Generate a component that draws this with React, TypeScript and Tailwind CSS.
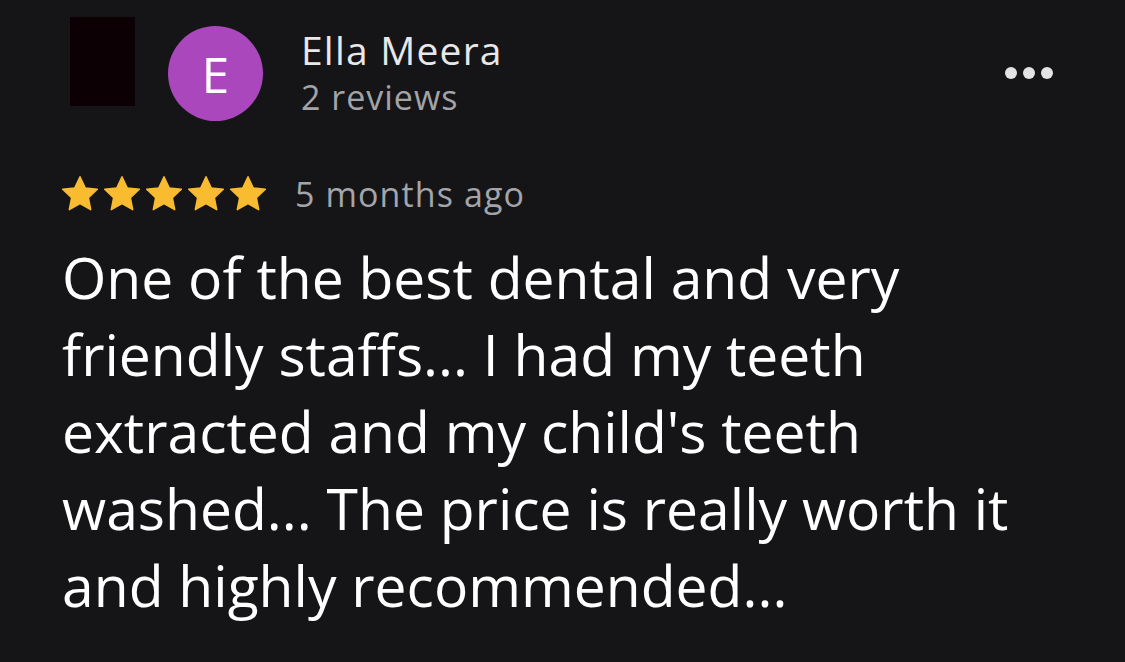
const Star = () => (
  <svg viewBox="0 0 24 24" className="w-[44px] h-[44px] -mx-[1px]">
    <path
      d="M12 2.6l2.83 6.05 6.62.8-4.88 4.55 1.27 6.55L12 17.3l-5.84 3.25 1.27-6.55L2.55 9.45l6.62-.8z"
      fill="#f9bb2f"
      stroke="#f9bb2f"
      strokeWidth="0.8"
      strokeLinejoin="round"
    />
  </svg>
)

export default function App() {
  return (
    <div
      className="w-[1125px] h-[662px] bg-[#151517] overflow-hidden relative"
      style={{ fontFamily: '"Open Sans", Roboto, sans-serif' }}
    >
      {/* header */}
      <div className="flex items-start pt-[17px]">
        <div className="ml-[70px] w-[65px] h-[89px] bg-[#0c0004]" />
        <div className="ml-[33px] mt-[9px] w-[95px] h-[95px] rounded-full bg-[#ab47bc] flex items-center justify-center text-white text-[50px] leading-none">
          E
        </div>
        <div className="ml-[38px] mt-[8px] flex flex-col">
          <span className="text-[39px] leading-[50px] tracking-[1.2px] text-[#e8e8ea]">Ella Meera</span>
          <span className="text-[34px] leading-[44px] tracking-[1px] text-[#a3a3a8]">2 reviews</span>
        </div>
        <div className="ml-auto mr-[72px] mt-[50px] flex gap-[6px]">
          <span className="w-[12px] h-[12px] rounded-full bg-[#e3e3e5]" />
          <span className="w-[12px] h-[12px] rounded-full bg-[#e3e3e5]" />
          <span className="w-[12px] h-[12px] rounded-full bg-[#e3e3e5]" />
        </div>
      </div>

      {/* rating */}
      <div className="flex items-center mt-[49px] ml-[59px]">
        <div className="flex gap-0">
          <Star />
          <Star />
          <Star />
          <Star />
          <Star />
        </div>
        <span className="ml-[26px] text-[34px] leading-[48px] tracking-[1.1px] text-[#a3a5aa]">5 months ago</span>
      </div>

      {/* body */}
      <p className="ml-[62px] mt-[21px] text-[57px] leading-[77px] text-white">
        One of the best dental and very
        <br />
        friendly staffs... I had my teeth
        <br />
        extracted and my child's teeth
        <br />
        washed... The price is really worth it
        <br />
        and highly recommended...
      </p>
    </div>
  )
}
